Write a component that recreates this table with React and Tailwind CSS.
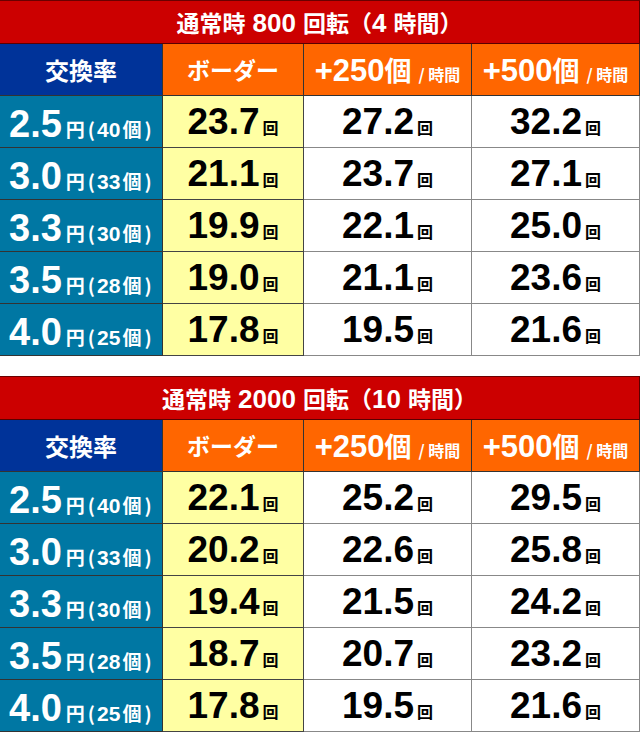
const tables = [
  {
    title: ["800", "4"],
    rows: [
      ["2.5", "40", "23.7", "27.2", "32.2"],
      ["3.0", "33", "21.1", "23.7", "27.1"],
      ["3.3", "30", "19.9", "22.1", "25.0"],
      ["3.5", "28", "19.0", "21.1", "23.6"],
      ["4.0", "25", "17.8", "19.5", "21.6"],
    ],
  },
  {
    title: ["2000", "10"],
    rows: [
      ["2.5", "40", "22.1", "25.2", "29.5"],
      ["3.0", "33", "20.2", "22.6", "25.8"],
      ["3.3", "30", "19.4", "21.5", "24.2"],
      ["3.5", "28", "18.7", "20.7", "23.2"],
      ["4.0", "25", "17.8", "19.5", "21.6"],
    ],
  },
];

function Val({ v }) {
  return (
    <span className="flex items-baseline justify-center text-black">
      <span className="font-['Liberation_Sans',Arial,sans-serif] text-[37px] font-bold leading-none">{v}</span>
      <span className="ml-[3px] text-[16px] font-bold leading-none">回</span>
    </span>
  );
}

function Per({ n }) {
  return (
    <div className="bg-[#ff6600] border-r border-b border-[#333] flex items-baseline justify-center text-white font-bold pt-[11px]">
      <span className="font-['Liberation_Sans',Arial,sans-serif] text-[31px] leading-none">+{n}</span>
      <span className="text-[27px] leading-none">個</span>
      <span className="ml-[7px] text-[16px] leading-none">/ 時間</span>
    </div>
  );
}

function Table({ t }) {
  return (
    <div className="w-[640px] border-t border-[#6a0000]">
      <div className="h-[43px] bg-[#cc0000] border-b border-r border-[#5a0000] flex items-baseline justify-center text-white font-bold pt-[9px]">
        <span className="text-[23px] leading-none">通常時</span>
        <span className="ml-[7px] font-['Liberation_Sans',Arial,sans-serif] text-[26px] leading-none">{t.title[0]}</span>
        <span className="ml-[7px] text-[23px] leading-none">回転（</span>
        <span className="font-['Liberation_Sans',Arial,sans-serif] text-[26px] leading-none">{t.title[1]}</span>
        <span className="ml-[7px] text-[23px] leading-none">時間）</span>
      </div>
      <div className="grid grid-cols-[163px_141px_168px_168px] h-[52px]">
        <div className="bg-[#003399] border-r border-b border-[#333] flex items-center justify-center text-white font-bold">
          <span className="text-[24px]">交換率</span>
        </div>
        <div className="bg-[#ff6600] border-r border-b border-[#333] flex items-center justify-center text-white font-bold">
          <span className="text-[23px]">ボーダー</span>
        </div>
        <Per n="250" />
        <Per n="500" />
      </div>
      {t.rows.map((r, i) => (
        <div key={i} className="grid grid-cols-[163px_141px_168px_168px] h-[52px]">
          <div className="bg-[#0077a3] border-r border-b border-[#333] flex items-baseline text-white font-bold pt-[9px] pl-[9px]">
            <span className="font-['Liberation_Sans',Arial,sans-serif] text-[38px] leading-none">{r[0]}</span>
            <span className="ml-[4px] text-[19px] leading-none">円</span>
            <span className="ml-[3px] mr-[2px] text-[19px] leading-none">(</span>
            <span className="font-['Liberation_Sans',Arial,sans-serif] text-[21px] leading-none">{r[1]}</span>
            <span className="ml-[2px] text-[19px] leading-none">個</span>
            <span className="ml-[3px] text-[19px] leading-none">)</span>
          </div>
          <div className="bg-[#ffffa3] border-r border-b border-[#444] flex items-center justify-center">
            <Val v={r[2]} />
          </div>
          <div className="bg-white border-r border-b border-[#888] flex items-center justify-center">
            <Val v={r[3]} />
          </div>
          <div className="bg-white border-r border-b border-[#888] flex items-center justify-center">
            <Val v={r[4]} />
          </div>
        </div>
      ))}
    </div>
  );
}

export default function App() {
  return (
    <div className="w-[640px] h-[746px] bg-white flex flex-col gap-[20px] font-['Noto_Sans_CJK_JP','Noto_Sans',sans-serif]">
      <Table t={tables[0]} />
      <Table t={tables[1]} />
    </div>
  );
}
